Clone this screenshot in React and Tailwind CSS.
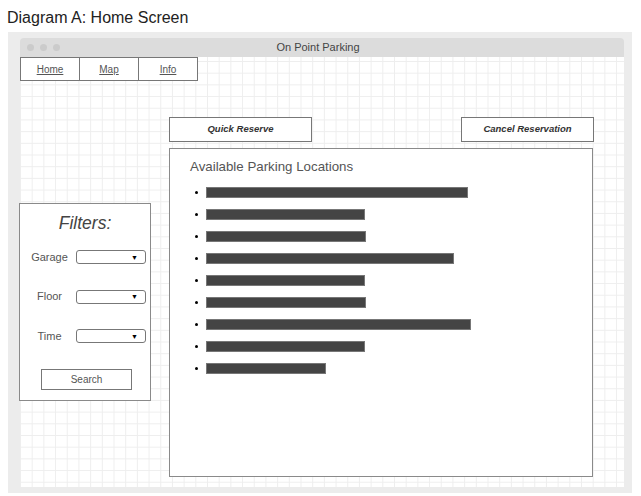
import React from 'react';

const bars = [262, 159, 160, 248, 159, 160, 265, 159, 120];

function Select() {
  return (
    <div className="w-[70px] h-[14px] border border-[#777] rounded-[3px] bg-white flex items-center justify-end pr-[7px]">
      <span className="text-[7px] leading-none text-black">▼</span>
    </div>
  );
}

function FilterRow({ label }) {
  return (
    <div className="flex items-center h-[14px]">
      <div className="w-[56px] pl-[3px] text-center text-[11px] text-[#555]">{label}</div>
      <Select />
    </div>
  );
}

export default function App() {
  return (
    <div className="w-[641px] h-[496px] bg-white font-['Liberation_Sans',Arial,sans-serif]">
      <div className="h-[32px] pl-[7px] pt-[9px] text-[16px] leading-[18px] text-[#222]">
        Diagram A: Home Screen
      </div>

      <div className="ml-[8px] w-[624px] h-[461px] bg-[#ececec] pl-[12px] pr-[8px] pt-[6px]">
        <div className="w-[604px] h-[449px] flex flex-col">
          {/* title bar */}
          <div className="h-[19px] bg-[#dcdcdc] rounded-t-[4px] flex items-center">
            <div className="flex gap-[6px] pl-[7px]">
              <span className="w-[7px] h-[7px] rounded-full bg-[#cbcbcb]" />
              <span className="w-[7px] h-[7px] rounded-full bg-[#cbcbcb]" />
              <span className="w-[7px] h-[7px] rounded-full bg-[#cbcbcb]" />
            </div>
            <div className="flex-1 text-center text-[11px] text-[#444] pr-[48px]">On Point Parking</div>
          </div>

          {/* canvas */}
          <div className="flex-1 bg-white bg-[linear-gradient(to_right,#eeeeee_1px,transparent_1px),linear-gradient(to_bottom,#eeeeee_1px,transparent_1px)] bg-[size:11.7px_11.7px] bg-[position:0px_4px]">
            <div className="flex h-[24px]">
              {['Home', 'Map', 'Info'].map((t) => (
                <div
                  key={t}
                  className="w-[60px] h-[24px] border border-[#777] -mr-px flex items-center justify-center text-[10px] text-[#555] underline bg-white"
                >
                  {t}
                </div>
              ))}
            </div>

            <div className="flex items-start">
              {/* filters */}
              <div className="mt-[122px] -ml-px w-[132px] h-[198px] border border-[#8a8a8a] bg-white flex flex-col">
                <div className="pt-[6px] h-[38px] text-center text-[17.5px] italic text-[#444]">Filters:</div>
                <div className="flex flex-col gap-[25.5px] pt-[8px]">
                  <FilterRow label="Garage" />
                  <FilterRow label="Floor" />
                  <FilterRow label="Time" />
                </div>
                <div className="flex justify-center pt-[26px] pl-[3px]">
                  <div className="w-[91px] h-[21px] border border-[#777] flex items-center justify-center text-[10px] text-[#555]">
                    Search
                  </div>
                </div>
              </div>

              {/* right column */}
              <div className="ml-[18px] mt-[36px] w-[425px] flex flex-col gap-[6px]">
                <div className="flex justify-between h-[25px]">
                  <div className="w-[143px] border border-[#777] bg-white flex items-center justify-center text-[9.5px] font-bold italic text-[#333]">
                    Quick Reserve
                  </div>
                  <div className="w-[133px] border border-[#777] bg-white flex items-center justify-center text-[9.5px] font-bold italic text-[#333]">
                    Cancel Reservation
                  </div>
                </div>
                <div className="w-[424px] h-[329px] border border-[#8a8a8a] bg-white pl-[20px] pt-[9px]">
                  <div className="text-[13.3px] text-[#555] leading-[18px]">Available Parking Locations</div>
                  <div className="flex flex-col gap-[11px] pt-[11px]">
                    {bars.map((w, i) => (
                      <div key={i} className="flex items-center h-[11px]">
                        <span className="w-[3px] h-[3px] rounded-full bg-black ml-[5px] mr-[8px]" />
                        <span className="h-[11px] bg-[#444] border border-[#777]" style={{ width: w }} />
                      </div>
                    ))}
                  </div>
                </div>
              </div>
            </div>
          </div>
        </div>
      </div>
    </div>
  );
}
